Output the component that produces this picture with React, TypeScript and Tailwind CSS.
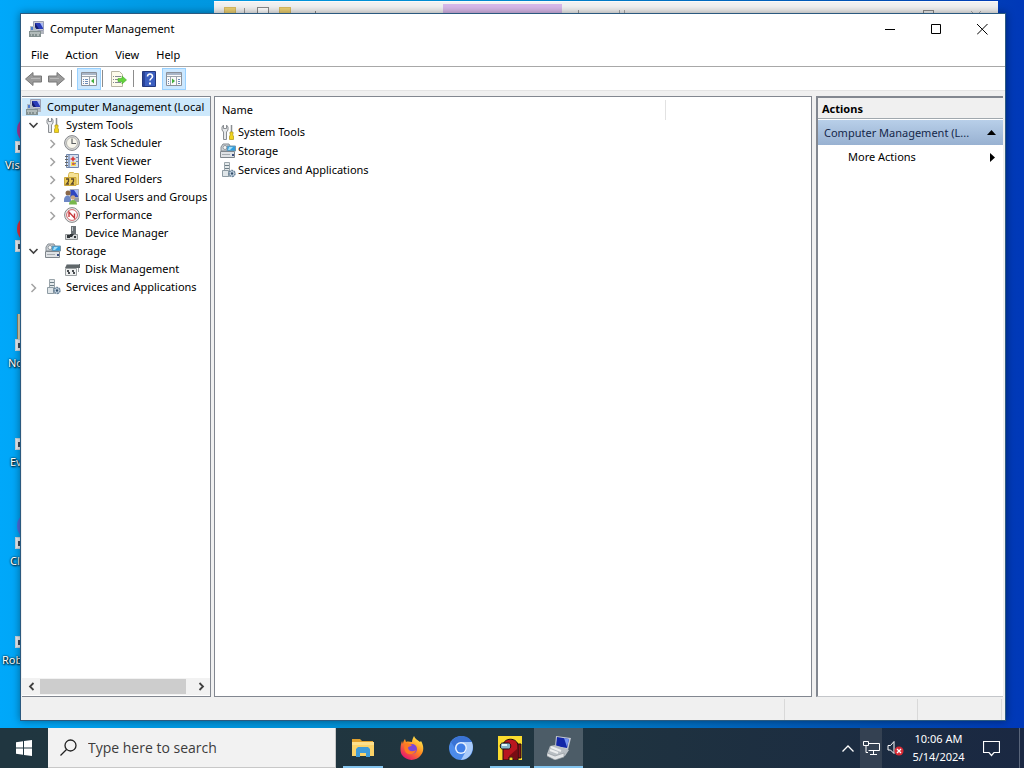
import type { ReactNode } from 'react';

function Glyph({ children, size = 'w-4 h-4', box = '0 0 16 16' }: { children: ReactNode; size?: string; box?: string }) {
    return (
        <svg className={`${size} shrink-0`} viewBox={box} fill="none" aria-hidden="true">
            {children}
        </svg>
    );
}

function ComputerIcon() {
    return (
        <Glyph>
            <path d="M4.500.5h10v9h-10z" fill="#c9cbd6" stroke="#9ba0b4" />
            <path d="M6 2h8v6H6z" fill="#2a3cb8" />
            <path d="M11 2h3v5z" fill="#a9b9f4" />
            <path d="M6 2l4 6H6z" fill="#141c6e" />
            <path d="M1 5h4l4 5H1z" fill="#b4bdc4" />
            <path d="M2 6h2v3H2z" fill="#4d7cd0" />
            <path d="M0 10h12v6H0z" fill="#849190" />
            <path d="M1 12h10M2 14h1M5 14h1M8 14h2" stroke="#dfe5e4" />
            <path d="M12 10h3v3h-3z" fill="#b2b6be" />
        </Glyph>
    );
}

function ToolsIcon() {
    return (
        <Glyph>
            <path d="M3.500 1L2 3v3l1.500 2v7.500h3V8L8 6V3L6.500 1v3.500h-3z" fill="#e6e8ea" stroke="#8a8e92" />
            <path d="M11.500 1v7" stroke="#8a8e92" strokeWidth="1.500" />
            <path d="M10 8h3v2l-.5 1 1 1v3.500h-4V12l1-1-.5-1z" fill="#f2d51c" stroke="#b59c22" strokeWidth=".8" />
        </Glyph>
    );
}

function ClockIcon() {
    return (
        <Glyph>
            <circle cx="8" cy="8" r="7.400" fill="#d9dadb" stroke="#858789" />
            <circle cx="8" cy="8" r="5.500" fill="#f8f6ec" stroke="#b5b5b0" />
            <path d="M8 3.500V8.500h4" stroke="#5e6062" strokeWidth="1.200" />
        </Glyph>
    );
}

function EventIcon() {
    return (
        <Glyph>
            <path d="M2.500 1.500h12v13h-12z" fill="#d5e0f0" stroke="#7288ac" />
            <path d="M1 3.500h3M1 6.500h3M1 9.500h3M1 12.500h3" stroke="#666" />
            <path d="M5 2v12" stroke="#7f98c0" strokeWidth="1.500" />
            <path d="M7 9h5v4H7z" fill="#f3dc58" />
            <path d="M9 3l1 2 2 1-2 1-1 2-1-2-2-1 2-1z" fill="#d83b38" />
            <path d="M8 10.500h4M12 4.500h2M12 8.500h2" stroke="#7387a8" />
            <path d="M9 9l2 3H8z" fill="#dd5b42" />
        </Glyph>
    );
}

function SharedIcon() {
    return (
        <Glyph>
            <path d="M4.500 3.500l1-2h4l1 1h4v11h-10z" fill="#f6e295" stroke="#d6b752" />
            <path d="M.5 6.500h11.500v8H.5z" fill="#eccb52" stroke="#cca83c" />
            <path d="M2 8h2.500v2.500L2.500 13H5M7 8h2.500v2.500L7.500 13H10" stroke="#5d4a2c" strokeWidth="1.300" />
        </Glyph>
    );
}

function UsersIcon() {
    return (
        <Glyph>
            <path d="M6 .5h8.500v8H6z" fill="#2e47c0" stroke="#a9adba" />
            <path d="M10 1h4v6z" fill="#a5b8f4" />
            <path d="M10 9h5v4h-5z" fill="#969da6" />
            <circle cx="4" cy="4" r="2.500" fill="#8a6848" />
            <path d="M0 11c0-6 7-6 7 0v2H0z" fill="#6d88c5" />
            <circle cx="9" cy="8.500" r="2.200" fill="#c9a982" />
            <path d="M5 15.500c0-6 8-6 8 0z" fill="#79b84c" />
        </Glyph>
    );
}

function PerformanceIcon() {
    return (
        <Glyph>
            <circle cx="8" cy="8" r="7.400" fill="#ececec" stroke="#858789" />
            <circle cx="8" cy="8" r="5.400" fill="#fff" stroke="#d2666a" />
            <path d="M5 10V5l5.500 6V6.500" stroke="#c8393d" strokeWidth="1.400" />
        </Glyph>
    );
}

function DeviceIcon() {
    return (
        <Glyph>
            <path d="M7 1h5v8H7z" fill="#6b7175" />
            <path d="M8 2h1v4H8z" fill="#bcc3c7" />
            <path d="M1.500 9.500h12v5h-12z" fill="#d7dadb" stroke="#8f9395" />
            <path d="M3 10h3v3H3zM6 9h4l-2 3H6z" fill="#303538" />
            <path d="M10 11h2v2h-2z" fill="#303538" />
        </Glyph>
    );
}

function StorageIcon() {
    return (
        <Glyph>
            <path d="M1 4l2-3h6l1 2v5H1z" fill="#ced3d8" stroke="#858c92" />
            <circle cx="5" cy="4.500" r="2" fill="#f7f7f7" stroke="#92989c" />
            <path d="M7 3h8.500v5H7z" fill="#2f9fe0" stroke="#7a97a9" />
            <path d="M9 4h4l-3 3H8z" fill="#a2def8" />
            <path d="M.5 8.500h14v6H.5z" fill="#dfe2e5" stroke="#7f868c" />
            <path d="M2 11.500h8" stroke="#a5abb0" />
            <path d="M12 11h2v2h-2z" fill="#3b4e80" />
        </Glyph>
    );
}

function DiskIcon() {
    return (
        <Glyph>
            <path d="M3 3h13v4H1z" fill="#60676a" />
            <path d="M3 3.500h12" stroke="#a5abaf" />
            <path d="M1.500 7.500h11v7h-11z" fill="#eff0f0" stroke="#9a9fa1" />
            <path d="M3 9h2v2H3zM8 9h2v2H8zM4 11h2v2H4zM9 11h2v2H9z" fill="#4a4e51" />
            <path d="M14.500 7v4" stroke="#9a9fa1" />
        </Glyph>
    );
}

function ServicesIcon() {
    return (
        <Glyph>
            <path d="M4.500.5h5v14h-5z" fill="#e4e9eb" stroke="#9ba5ab" />
            <path d="M5 3.500h4M5 6.500h4" stroke="#6d7e87" />
            <path d="M2.500 8.500h6v6h-6z" fill="#e0e6e9" stroke="#8f9ca4" />
            <circle cx="12" cy="11.500" r="3" fill="#c8d7e5" stroke="#6b8499" strokeWidth="1.500" strokeDasharray="2 .6" />
            <circle cx="12" cy="11.500" r="1.200" fill="#36516c" />
        </Glyph>
    );
}

function Arrow({ flip }: { flip?: boolean }) {
    return (
        <Glyph size="w-[17px] h-4" box="0 0 17 16">
            <path
                d={flip ? 'M16.500 8L9 1.500v3.500H.5v6H9v3.500z' : 'M.5 8L8 1.500v3.500h8.500v6H8v3.500z'}
                fill="#9b9b9b"
                stroke="#787878"
            />
            <path d={flip ? 'M2 7.500h9' : 'M6 7.500h9'} stroke="#b8b8b8" />
        </Glyph>
    );
}

function PaneIcon({ right }: { right?: boolean }) {
    return (
        <Glyph size="w-4 h-4">
            <path d="M.5 1.500h15v13H.5z" fill="#fafafa" stroke="#8a9099" />
            <path d="M1 3h14" stroke="#a9b6c8" strokeWidth="2" />
            <path d="M1 5.500h14" stroke="#9ea5ad" />
            {right ? (
                <>
                    <path d="M4.500 6v8M10.500 6v8" stroke="#9ea5ad" />
                    <path d="M12 8.500h2M12 10.500h2M12 12.500h2M2 8.500h1M2 10.500h1M2 12.500h1" stroke="#6b8bb8" />
                    <path d="M6 7.500v5L9 10z" fill="#3fae3a" />
                </>
            ) : (
                <>
                    <path d="M8.500 6v8" stroke="#9ea5ad" />
                    <path d="M2 8.500h5M2 10.500h5M2 12.500h5" stroke="#6b8bb8" strokeDasharray="1 1 3" />
                    <path d="M13 7.500v5L10 10z" fill="#3fae3a" />
                </>
            )}
        </Glyph>
    );
}

function ExportIcon() {
    return (
        <Glyph size="w-[17px] h-4" box="0 0 17 16">
            <path d="M1.500.5h8l3 3v12h-11z" fill="#fdfbea" stroke="#b9b6a4" />
            <path d="M3 5.500h1M5 5.500h6M3 8.500h1M5 8.500h4M3 11.500h1M5 11.500h6" stroke="#858994" />
            <path d="M8 7.500h4V5l4.500 4-4.500 4v-2.500H8z" fill="#63d43c" stroke="#43a72c" strokeWidth=".6" />
        </Glyph>
    );
}

function HelpIcon() {
    return (
        <svg className="w-[14px] h-4" viewBox="0 0 14 16" fill="none" aria-hidden="true">
            <path d="M.5.500h13v15H.5z" fill="#3c5fc0" stroke="#24387e" />
            <path d="M1 1h2v14H1z" fill="#2a449a" />
            <path d="M5.500 5.500c0-3.500 5-3 5 0 0 2-2.500 2-2.500 4" stroke="#fff" strokeWidth="1.600" />
            <path d="M7 11.500h2v2H7z" fill="#fff" />
        </svg>
    );
}

function Chevron({ open }: { open?: boolean }) {
    return (
        <Glyph size="w-[15px] h-4" box="0 0 15 16">
            {open ? (
                <path d="M3.500 6l4 4 4-4" stroke="#404040" strokeWidth="1.600" />
            ) : (
                <path d="M5.500 5l4 4-4 4" stroke="#a2a2a2" strokeWidth="1.500" />
            )}
        </Glyph>
    );
}

const tree = [
    { icon: ToolsIcon, label: 'System Tools', level: 1, arrow: 'open' },
    { icon: ClockIcon, label: 'Task Scheduler', level: 2, arrow: 'closed' },
    { icon: EventIcon, label: 'Event Viewer', level: 2, arrow: 'closed' },
    { icon: SharedIcon, label: 'Shared Folders', level: 2, arrow: 'closed' },
    { icon: UsersIcon, label: 'Local Users and Groups', level: 2, arrow: 'closed' },
    { icon: PerformanceIcon, label: 'Performance', level: 2, arrow: 'closed' },
    { icon: DeviceIcon, label: 'Device Manager', level: 2, arrow: '' },
    { icon: StorageIcon, label: 'Storage', level: 1, arrow: 'open' },
    { icon: DiskIcon, label: 'Disk Management', level: 2, arrow: '' },
    { icon: ServicesIcon, label: 'Services and Applications', level: 1, arrow: 'closed' },
];

const items = [
    { icon: ToolsIcon, label: 'System Tools' },
    { icon: StorageIcon, label: 'Storage' },
    { icon: ServicesIcon, label: 'Services and Applications' },
];

const shortcuts = [
    { label: 'Vis', indent: 'pl-[5px]', art: 'bg-[#a03a9c] rounded-full' },
    { label: '', indent: 'pl-2', art: 'bg-[#e2303c] rounded-full' },
    { label: 'No', indent: 'pl-2', art: 'bg-[#d9d3b8] border-l border-[#8a8468]' },
    { label: 'Ev', indent: 'pl-[10px]', art: 'bg-transparent' },
    { label: 'Cl', indent: 'pl-[10px]', art: 'bg-[#4f6fe0] rounded-full' },
    { label: 'Rob', indent: 'pl-[2px]', art: 'bg-transparent' },
];

function Desktop() {
    return (
        <ul className="pt-[75px]">
            {shortcuts.map((s, i) => (
                <li key={i} className={`h-[99px] flex flex-col justify-end ${s.indent}`}>
                    <div className="absolute left-[17px] mb-[30px] self-start">
                        <div className={`w-8 h-7 ${s.art}`} />
                    </div>
                    <div className="absolute left-[15px] mb-[21px] w-3 h-3 bg-[#e8edf2] border border-[#c5d4e0]">
                        <div className="ml-[2px] mt-[3px] w-2 h-[5px] bg-[#3a4a5c]" />
                    </div>
                    <span className="h-[18px] leading-[18px] text-white [text-shadow:1px_1px_2px_#000,0_0_2px_#000]">{s.label}</span>
                </li>
            ))}
        </ul>
    );
}

function BackWindow() {
    return (
        <div className="absolute left-[214px] right-[26px] top-px h-20 bg-[#f1f1f1] flex items-start border-t border-[#fafafa]">
            <div className="flex pt-[5px] pl-[10px] w-[229px] shrink-0">
                <div className="w-3 h-3 bg-[#ecd072] border border-[#d9bb62]" />
                <div className="ml-2 w-px h-3 mt-px bg-[#999]" />
                <div className="ml-3 w-3 h-3 border border-[#888] bg-white" />
                <div className="ml-[10px] w-3 h-3 bg-[#ecd072] border border-[#d9bb62]" />
                <div className="ml-6 w-px h-3 mt-1 bg-[#888]" />
            </div>
            <div className="mt-[2px] w-[119px] h-5 bg-[#d8b9ea]" />
            <div className="mt-2 ml-4 w-px h-3 bg-[#999]" />
            <div className="mt-2 ml-10 w-[6px] h-3 border-x border-[#aaa]" />
            <div className="ml-auto mr-9 mt-2 w-[11px] h-[11px] border border-[#888]" />
            <Glyph size="w-3 h-3 mt-2 mr-4" box="0 0 12 12">
                <path d="M1 1l10 10M11 1L1 11" stroke="#aaa" />
            </Glyph>
        </div>
    );
}

function TitleBar() {
    return (
        <header className="flex items-center h-[30px] pl-2">
            <ComputerIcon />
            <h1 className="ml-[5px] flex-1">Computer Management</h1>
            <button aria-label="Minimize" className="w-[46px] h-full flex items-center justify-center">
                <Glyph size="w-[11px] h-[11px]" box="0 0 11 11"><path d="M0 5.500h10" stroke="#000" /></Glyph>
            </button>
            <button aria-label="Maximize" className="w-[46px] h-full flex items-center justify-center">
                <Glyph size="w-[11px] h-[11px]" box="0 0 11 11"><path d="M.5.500h9v9h-9z" stroke="#000" /></Glyph>
            </button>
            <button aria-label="Close" className="w-[46px] h-full flex items-center justify-center">
                <Glyph size="w-[11px] h-[11px]" box="0 0 11 11"><path d="M0 0l10.500 10.500M10.500 0L0 10.500" stroke="#000" /></Glyph>
            </button>
        </header>
    );
}

function Toolbar() {
    return (
        <div className="flex items-center h-6 border-b border-[#e4e4e4] pl-1">
            <button aria-label="Back"><Arrow /></button>
            <button aria-label="Forward" className="ml-[6px]"><Arrow flip /></button>
            <span className="ml-[6px] w-px h-[17px] bg-[#8c8c8c]" />
            <button aria-label="Show console tree" className="ml-[5px] w-6 h-[22px] flex items-center justify-center bg-[#cce8ff] border border-[#99d1ff]">
                <PaneIcon />
            </button>
            <span className="ml-px w-px h-[17px] bg-[#8c8c8c]" />
            <button aria-label="Export list" className="ml-[7px]"><ExportIcon /></button>
            <span className="ml-[6px] w-px h-[17px] bg-[#8c8c8c]" />
            <button aria-label="Help" className="ml-2"><HelpIcon /></button>
            <button aria-label="Show action pane" className="ml-[6px] w-6 h-[22px] flex items-center justify-center bg-[#cce8ff] border border-[#99d1ff]">
                <PaneIcon right />
            </button>
        </div>
    );
}

function TreePane() {
    return (
        <nav className="w-[189px] shrink-0 flex flex-col bg-white border-y border-r border-[#828790]">
            <ul className="flex-1 pt-px overflow-hidden whitespace-nowrap">
                <li className="flex items-center h-[18px] pl-1 bg-[#cde8fb]">
                    <ComputerIcon />
                    <span className="ml-[5px]">Computer Management (Local</span>
                </li>
                {tree.map((node) => (
                    <li key={node.label} className={`flex items-center h-[18px] ${node.level === 2 ? 'pl-[23px]' : 'pl-1'}`}>
                        {node.arrow ? <Chevron open={node.arrow === 'open'} /> : <span className="w-[15px]" />}
                        <span className="ml-1 mr-[5px]"><node.icon /></span>
                        <span>{node.label}</span>
                    </li>
                ))}
            </ul>
            <div className="flex items-center h-[17px] mb-px bg-[#f2f2f2]">
                <button aria-label="Scroll left" className="w-[18px] flex justify-center">
                    <Glyph size="w-[9px] h-[9px]" box="0 0 9 9"><path d="M6.500 1L3 4.500 6.500 8" stroke="#404040" strokeWidth="1.800" /></Glyph>
                </button>
                <div className="flex-1 flex h-[15px]">
                    <div className="w-[96%] bg-[#cdcdcd]" />
                </div>
                <button aria-label="Scroll right" className="w-[18px] flex justify-center">
                    <Glyph size="w-[9px] h-[9px]" box="0 0 9 9"><path d="M2.500 1L6 4.500 2.500 8" stroke="#404040" strokeWidth="1.800" /></Glyph>
                </button>
            </div>
        </nav>
    );
}

function ListPane() {
    return (
        <main className="flex-1 min-w-0 bg-white border border-[#828790]">
            <table className="w-full table-fixed text-left">
                <thead>
                    <tr className="h-[25px]">
                        <th className="w-[451px] p-0 pl-[7px] font-normal">
                            <div className="h-5 leading-5 border-r border-[#e2e2e2]">Name</div>
                        </th>
                        <th className="p-0" />
                    </tr>
                </thead>
                <tbody>
                    {items.map((item) => (
                        <tr key={item.label} className="h-[19px]">
                            <td className="p-0 pl-[5px]">
                                <div className="flex items-center gap-[2px] h-[19px]">
                                    <item.icon />
                                    {item.label}
                                </div>
                            </td>
                            <td className="p-0" />
                        </tr>
                    ))}
                </tbody>
            </table>
        </main>
    );
}

function ActionsPane() {
    return (
        <aside className="ml-px w-[187px] shrink-0 bg-white border-l-2 border-t-2 border-b border-[#828790] border-b-[#c4c6ca]">
            <h2 className="h-[21px] leading-[21px] pl-1 font-bold bg-[#f0f0f0] border-b border-[#a0a8ae]">Actions</h2>
            <button className="mt-px flex items-center justify-between w-full h-[25px] pl-[6px] pr-[7px] bg-gradient-to-b from-[#b8cfe9] to-[#98b1d1] text-[#14274a]">
                Computer Management (L...
                <Glyph size="w-[9px] h-[5px]" box="0 0 9 5"><path d="M0 5l4.500-5L9 5z" fill="#000" /></Glyph>
            </button>
            <button className="flex items-center justify-between w-full h-6 pl-[30px] pr-2">
                More Actions
                <Glyph size="w-[5px] h-[9px]" box="0 0 5 9"><path d="M0 0l5 4.500L0 9z" fill="#000" /></Glyph>
            </button>
        </aside>
    );
}

function ManagementWindow() {
    return (
        <section className="absolute left-5 right-[18px] top-[13px] bottom-[7px] flex flex-col bg-[#f0f0f0] border border-[#2b5a80] shadow-[0_0_8px_rgba(0,0,0,0.4)]">
            <div className="bg-white">
                <TitleBar />
                <div className="flex h-[23px] items-center border-b border-[#a8a8a8] pl-[10px] gap-[17px]">
                    <button>File</button>
                    <button>Action</button>
                    <button>View</button>
                    <button>Help</button>
                </div>
                <Toolbar />
            </div>
            <div className="flex-1 min-h-0 flex gap-[3px] pt-[5px] pl-px pr-[2px]">
                <TreePane />
                <ListPane />
                <ActionsPane />
            </div>
            <footer className="flex justify-end h-[23px] pt-[2px]">
                <div className="w-[133px] border-l border-[#d9d9d9]" />
                <div className="w-[85px] border-x border-[#d9d9d9]" />
                <div className="w-[3px]" />
            </footer>
        </section>
    );
}

function ExplorerIcon() {
    return (
        <Glyph size="w-6 h-6" box="0 0 24 24">
            <path d="M1 3h8l2 2h11v4H1z" fill="#e0a12e" />
            <path d="M1 6h22v14H1z" fill="#fbd368" />
            <path d="M1 6h22v3H1z" fill="#fde08c" />
            <path d="M5 21v-8l2-2h10l2 2v8h-4v-4H9v4z" fill="#3f9bd8" />
        </Glyph>
    );
}

function FirefoxIcon() {
    return (
        <Glyph size="w-6 h-6" box="0 0 24 24">
            <defs>
                <linearGradient id="fox" x1="19" y1="3" x2="5" y2="22" gradientUnits="userSpaceOnUse">
                    <stop stopColor="#ffe14a" />
                    <stop offset=".45" stopColor="#ff8a1f" />
                    <stop offset="1" stopColor="#e8186c" />
                </linearGradient>
            </defs>
            <path d="M14 0c1 3 4 4 6 6l1-1c3 5 3 10 0 14-5 7-15 6-19 0C-.5 15 .5 9 2 5l1 3c0-2 1-4 2-5l1 3c2-1 4 0 6 0 0-2 1-4 2-6z" fill="url(#fox)" />
            <circle cx="12" cy="13" r="5" fill="#7b46d8" />
            <path d="M5 8c3-2 5 0 7 1-1 2-4 1-4 3 1 4 5 4 8 2-1 5-9 6-11 1-1-2-1-5 0-7z" fill="#ff7a22" />
        </Glyph>
    );
}

function ChromiumIcon() {
    return (
        <Glyph size="w-6 h-6" box="0 0 24 24">
            <circle cx="12" cy="12" r="12" fill="#4c8bea" />
            <path d="M12 6h11c3 8-2 18-11 18l5-9c2-3 0-7-5-9z" fill="#a9cbfa" />
            <path d="M2 6c5-8 17-8 21 0H12c-4 0-6 3-6 6z" fill="#3a73d4" />
            <circle cx="12" cy="12" r="6" fill="#e8f1fe" />
            <circle cx="12" cy="12" r="4.500" fill="#3f7fe8" />
        </Glyph>
    );
}

function AmongUsIcon() {
    return (
        <Glyph size="w-6 h-6" box="0 0 24 24">
            <path d="M0 0h24v24H0z" fill="#fbdc2e" />
            <path d="M18 8h5v14h-5z" fill="#8c1018" stroke="#1a0c0e" />
            <path d="M5 24V10c0-9 15-9 15 0v14h-5v-3h-4v3z" fill="#b8161f" stroke="#1a0c0e" />
            <path d="M11 20l8-7v10h-4v-3z" fill="#7a0d14" />
            <path d="M4.500 7h6c3 0 3 6 0 6h-6c-3 0-3-6 0-6z" fill="#87b6c8" stroke="#1a0c0e" />
            <path d="M4 9h5" stroke="#e6f6fb" strokeWidth="2" />
        </Glyph>
    );
}

function ManagementTaskIcon() {
    return (
        <Glyph size="w-6 h-6" box="0 0 24 24">
            <path d="M9 0l15 2-3 12-13-3z" fill="#c3c8d2" />
            <path d="M10 1l12 2-2 9-11-2z" fill="#1226a8" />
            <path d="M17 2l5 1-2 8z" fill="#7392ee" />
            <path d="M3 10l5-1 14 5-4 6-9 2-9-4z" fill="#b8bec3" />
            <path d="M0 17l8 3 9-3v4l-9 3-8-4z" fill="#e2e5e7" stroke="#8b9298" strokeWidth=".6" />
            <path d="M4 11l10 4M3 14l8 3" stroke="#eceeef" strokeWidth="2" />
        </Glyph>
    );
}

const apps = [
    { icon: ExplorerIcon, label: 'File Explorer', state: 'running' },
    { icon: FirefoxIcon, label: 'Firefox', state: '' },
    { icon: ChromiumIcon, label: 'Chromium', state: '' },
    { icon: AmongUsIcon, label: 'Among Us', state: 'running' },
    { icon: ManagementTaskIcon, label: 'Computer Management', state: 'active' },
];

function Taskbar() {
    return (
        <footer className="flex h-10 shrink-0 bg-gradient-to-r from-[#203640] via-[#20353f] to-[#1a2842] text-white">
            <button aria-label="Start" className="w-12 flex items-center justify-center">
                <Glyph>
                    <path d="M0 2.300L7 1.300v6.200H0zM8 1.100L16 0v7.500H8zM0 8.500h7v6.200l-7-1zM8 8.500h8V16l-8-1.100z" fill="#fff" />
                </Glyph>
            </button>
            <label className="flex items-center w-72 bg-[#f2f2f2] border-b border-r border-[#c8c8c8] pl-3">
                <Glyph size="w-[17px] h-[17px]" box="0 0 17 17">
                    <circle cx="10.500" cy="6.500" r="5.500" stroke="#222" strokeWidth="1.300" />
                    <path d="M6.500 10.500L.5 16.500" stroke="#222" strokeWidth="1.300" />
                </Glyph>
                <input
                    type="text"
                    aria-label="Search"
                    placeholder="Type here to search"
                    className="ml-[11px] flex-1 min-w-0 text-sm font-['Open_Sans',sans-serif] bg-transparent outline-none placeholder:text-[#3c3c3c]"
                />
            </label>
            <div className="flex ml-[2px]">
                {apps.map((app) => (
                    <button
                        key={app.label}
                        aria-label={app.label}
                        className={`w-[49px] flex flex-col items-center ${app.state === 'active' ? 'bg-[#4c5c67]' : ''}`}
                    >
                        <span className="flex-1 flex items-center pt-[2px]"><app.icon /></span>
                        <span className={`h-[2px] ${app.state === 'active' ? 'w-full bg-[#83c4ee]' : app.state ? 'w-10 bg-[#83c4ee]' : ''}`} />
                    </button>
                ))}
            </div>
            <div className="ml-auto flex items-center">
                <button aria-label="Show hidden icons" className="w-6 flex justify-center">
                    <Glyph size="w-3 h-[7px]" box="0 0 12 7"><path d="M.5 6.500L6 1l5.500 5.500" stroke="#fff" strokeWidth="1.300" /></Glyph>
                </button>
                <button aria-label="Network" className="w-[22px] mr-px h-full flex items-center justify-center bg-[#344152]">
                    <Glyph size="w-[17px] h-4" box="0 0 17 16">
                        <path d="M5.500 3.500h11v7h-11M10.500 11v3M7 14.500h7M.5 1.500h5v4h-5zM3 5.500v7h2" stroke="#fff" />
                    </Glyph>
                </button>
                <button aria-label="Volume muted" className="w-6 flex justify-center">
                    <Glyph size="w-[17px] h-4" box="0 0 17 16">
                        <path d="M1 5.500h2.500l3.500-4v12L3.500 10H1z" stroke="#fff" />
                        <circle cx="12" cy="11" r="4.500" fill="#d92b35" />
                        <path d="M10 9l4 4M14 9l-4 4" stroke="#fff" strokeWidth="1.300" />
                    </Glyph>
                </button>
                <div className="w-[63px] text-center leading-[18px] whitespace-nowrap">
                    <div>10:06 AM</div>
                    <div>5/14/2024</div>
                </div>
                <button aria-label="Notifications" className="w-[42px] flex justify-center">
                    <Glyph size="w-[17px] h-[17px]" box="0 0 17 17">
                        <path d="M.5 1.500h16v11h-5.500l-2.500 3-2.500-3H.5z" stroke="#fff" strokeWidth="1.200" />
                    </Glyph>
                </button>
                <div className="w-3 h-full pl-[7px]"><div className="w-px h-full bg-[#59657a]" /></div>
            </div>
        </footer>
    );
}

export default function App() {
    return (
        <div className="h-screen flex flex-col overflow-hidden text-[11px] leading-4 text-black font-['Noto_Sans','Open_Sans',sans-serif]">
            <div className="relative flex-1 min-h-0 overflow-hidden bg-[linear-gradient(to_right,#00a8fa_0%,#009ae4_15%,#0088cc_50%,#0050b4_85%,#0038b8_100%)]">
                <Desktop />
                <BackWindow />
                <ManagementWindow />
            </div>
            <Taskbar />
        </div>
    );
}
